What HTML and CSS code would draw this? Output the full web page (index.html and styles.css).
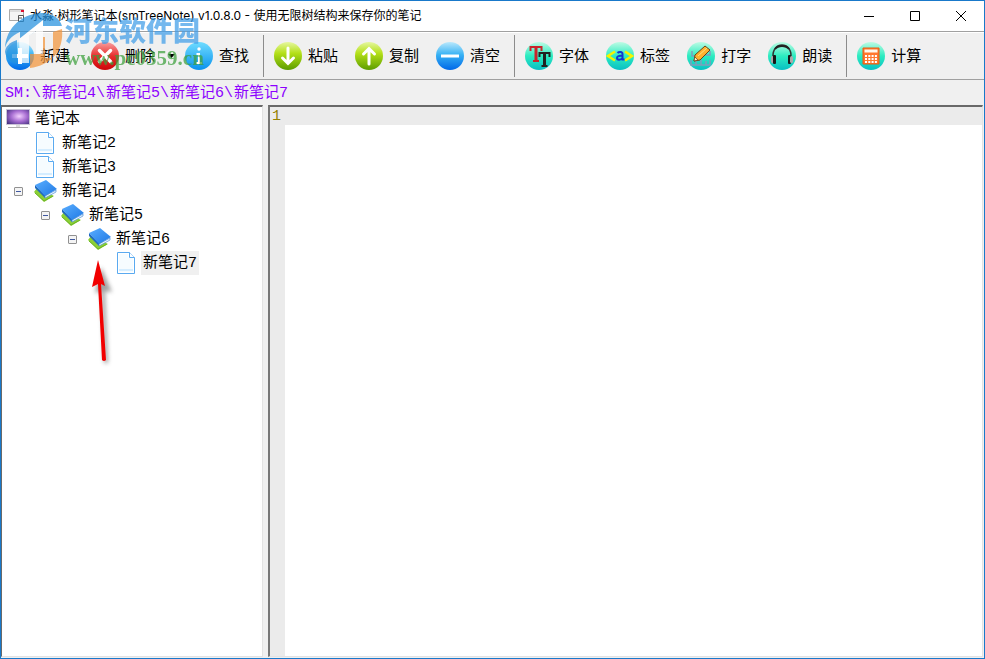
FILE: index.html
```html
<!DOCTYPE html>
<html lang="zh-CN">
<head>
<meta charset="utf-8">
<title>水淼·树形笔记本(smTreeNote) v1.0.8.0</title>
<link rel="stylesheet" href="styles.css">
</head>
<body>
<svg class="defs" aria-hidden="true">
  <defs>
    <linearGradient id="blue" x1="0" y1="0" x2="0" y2="1"><stop offset="0" stop-color="#b9e8fc"/><stop offset=".45" stop-color="#38b2f4"/><stop offset="1" stop-color="#0068e8"/></linearGradient>
    <linearGradient id="info" x1="0" y1="0" x2="0" y2="1"><stop offset="0" stop-color="#6fdcff"/><stop offset="1" stop-color="#0a92ee"/></linearGradient>
    <linearGradient id="red" x1="0" y1="0" x2="0" y2="1"><stop offset="0" stop-color="#f9a0a0"/><stop offset=".5" stop-color="#e82e2e"/><stop offset="1" stop-color="#cc0508"/></linearGradient>
    <linearGradient id="lime" x1="0" y1="0" x2="0" y2="1"><stop offset="0" stop-color="#e6f7a0"/><stop offset=".4" stop-color="#b4e018"/><stop offset="1" stop-color="#5c9c00"/></linearGradient>
    <linearGradient id="teal" x1="0" y1="0" x2="0" y2="1"><stop offset="0" stop-color="#bdfbe4"/><stop offset=".5" stop-color="#2cecc0"/><stop offset="1" stop-color="#08bfc4"/></linearGradient>
    <linearGradient id="cover" x1="0" y1="0" x2="1" y2="1"><stop offset="0" stop-color="#5aaeff"/><stop offset="1" stop-color="#1f78e4"/></linearGradient>
    <radialGradient id="screen" cx=".55" cy=".45" r=".7"><stop offset="0" stop-color="#f3d0ff"/><stop offset=".5" stop-color="#a56bd0"/><stop offset="1" stop-color="#42307e"/></radialGradient>
    <filter id="soft" x="-1" y="-.2" width="3" height="1.4"><feGaussianBlur stdDeviation="2"/></filter>
    <symbol id="book" viewBox="0 0 24 24">
      <path d="M1 13 4 9 21 17 11 23Z" fill="#8ccf36"/>
      <path d="M2 14 11 22 20 17" fill="none" stroke="#6db528"/>
      <path d="M2 6 12 16v3L2 9Z" fill="#2369bd"/>
      <path d="M12 17 23 11v2l-11 6Z" fill="#eef6ff" stroke="#4d8fd6" stroke-width=".7"/>
      <path d="M2 6 13 1l11 9-12 7Z" fill="url(#cover)"/>
    </symbol>
    <symbol id="page" viewBox="0 0 18 22">
      <path d="M.5.5h12l5 5v16H.5Z" fill="#fff" stroke="#5aaaf0"/>
      <path d="M2 2h9v4h5v14H2Z" fill="#f6fcff"/>
      <path d="M2 18h14" stroke="#d4edff" stroke-width="2"/>
      <path d="M12.500.500v5h5" fill="#fff" stroke="#5aaaf0"/>
    </symbol>
  </defs>
</svg>
<div class="window">
  <header class="titlebar">
    <svg class="app-icon" viewBox="0 0 16 16"><path d="M.5 1.500h14v11H.5Z" fill="#f4f4f4" stroke="#aaa"/><path d="M1 2h13v2H1Z" fill="#ddd"/><path d="M12 2h3v2h-3Z" fill="#e01030"/><path d="M9.500 7.500h5v6h-5Z" fill="#fff" stroke="#555"/><path d="M9 10h4" stroke="#555"/></svg>
    <h1 class="caption">水淼·树形笔记本(smTreeNote) v1.0.8.0 - 使用无限树结构来保存你的笔记</h1>
    <button class="win-btn" aria-label="最小化"><svg viewBox="0 0 12 12"><path d="M1 6.500h10"/></svg></button>
    <button class="win-btn" aria-label="最大化"><svg viewBox="0 0 12 12"><path d="M1.500 1.500h9v9h-9Z"/></svg></button>
    <button class="win-btn" aria-label="关闭"><svg viewBox="0 0 12 12"><path d="m1 1 10 10M11 1 1 11"/></svg></button>
  </header>

  <nav class="toolbar">
    <div class="group group-first">
      <button class="tool tool-new"><svg viewBox="0 0 28 28"><circle cx="14" cy="14" r="14" fill="url(#blue)"/><path d="M14 6v16M6 14h16" stroke="#fff" stroke-width="4"/></svg><span>新建</span></button>
      <div class="split">
        <button class="tool"><svg viewBox="0 0 28 28"><circle cx="14" cy="14" r="14" fill="url(#red)"/><path d="m8.500 8.500 11 11M19.500 8.500l-11 11" stroke="#fff" stroke-width="3.500" stroke-linecap="round"/></svg><span>删除</span></button>
        <button class="drop" aria-label="更多"><svg viewBox="0 0 7 4"><path d="M0 0h7L3.500 4Z"/></svg></button>
      </div>
      <button class="tool"><svg viewBox="0 0 28 28"><circle cx="14" cy="14" r="14" fill="url(#info)"/><circle cx="14" cy="7" r="1.700" fill="#fff"/><path d="M11.500 12H14v9M11 21h6" fill="none" stroke="#fff" stroke-width="2"/></svg><span>查找</span></button>
    </div>
    <div class="group">
      <button class="tool"><svg viewBox="0 0 28 28"><circle cx="14" cy="14" r="14" fill="url(#lime)"/><path d="M14 6v15M8.500 16l5.500 5.500 5.500-5.500" fill="none" stroke="#fff" stroke-width="3" stroke-linecap="round"/></svg><span>粘贴</span></button>
      <button class="tool"><svg viewBox="0 0 28 28"><circle cx="14" cy="14" r="14" fill="url(#lime)"/><path d="M14 22V7M8.500 12 14 6.500l5.500 5.500" fill="none" stroke="#fff" stroke-width="3" stroke-linecap="round"/></svg><span>复制</span></button>
      <button class="tool"><svg viewBox="0 0 28 28"><circle cx="14" cy="14" r="14" fill="url(#blue)"/><path d="M5 14h18" stroke="#fff" stroke-width="3"/></svg><span>清空</span></button>
    </div>
    <div class="group">
      <button class="tool"><svg viewBox="0 0 28 28"><circle cx="14" cy="14" r="14" fill="url(#teal)"/><path d="M5.500 9V5h11v4M11 5v14M8 19h6" fill="none" stroke="#c9252b" stroke-width="2"/><path d="M11 5v14" stroke="#c9252b" stroke-width="3"/><path d="M14.500 15v-4h10v4M16.500 24h6" fill="none" stroke="#222" stroke-width="2"/><path d="M19.500 11v13" stroke="#222" stroke-width="3"/></svg><span>字体</span></button>
      <button class="tool"><svg viewBox="0 0 28 28"><circle cx="14" cy="14" r="14" fill="url(#teal)"/><path d="M9 9.500 2 14l7 4.500M19 9.500l7 4.500-7 4.500" fill="none" stroke="#f6f400" stroke-width="2.500"/><path d="M11.500 11c1.500-1.500 5-1.500 5 1v5.500h2M16.500 13.500c-3 0-5.500.5-5.500 2.500s3.500 2.500 5.500 0" fill="none" stroke="#1238d0" stroke-width="2"/></svg><span>标签</span></button>
      <button class="tool"><svg viewBox="0 0 28 28"><circle cx="14" cy="14" r="14" fill="url(#teal)"/><path d="M5 9v5h6M4 18v5h19v-5M9 19v4M14 18v5M19 19v4M18 13h5V9" fill="none" stroke="#7f9dbc" stroke-width="1.500"/><path d="m7 19 1-6 10-9 5 4-10 10Z" fill="#ffb12d" stroke="#684219"/><path d="m11 14 9-8" stroke="#ffe07b"/><path d="m7 19 1-4 3 3Z" fill="#fff2ce" stroke="#684219" stroke-width=".7"/></svg><span>打字</span></button>
      <button class="tool"><svg viewBox="0 0 28 28"><circle cx="14" cy="14" r="14" fill="url(#teal)"/><path d="M5 15C4-1 24-1 23 15" fill="none" stroke="#333" stroke-width="1.500"/><path d="M7 7c3-4 11-4 14 0" fill="none" stroke="#222" stroke-width="2"/><rect x="3" y="14" width="3" height="7" rx="1.500" fill="#aaa"/><rect x="5" y="13" width="3" height="9" rx="1" fill="#171717"/><rect x="20" y="13" width="3" height="9" rx="1" fill="#171717"/><rect x="22" y="14" width="3" height="7" rx="1.500" fill="#aaa"/></svg><span>朗读</span></button>
    </div>
    <div class="group">
      <button class="tool"><svg viewBox="0 0 28 28"><circle cx="14" cy="14" r="14" fill="url(#teal)"/><path d="M6 6h16v16H6Z" fill="#ff782d" stroke="#e85d14"/><path d="M7.500 7.500h13v3h-13Z" fill="#fff8ed"/><path d="M8 14h12M8 17h12M8 20h12" stroke="#fff" stroke-width="2" stroke-dasharray="2 1.300"/></svg><span>计算</span></button>
    </div>
  </nav>

  <div class="path"><span>SM:\</span><span>新笔记4\</span><span>新笔记5\</span><span>新笔记6\</span><span>新笔记7</span></div>

  <main class="panes">
    <aside class="tree">
      <ul>
        <li class="row root"><svg class="monitor" viewBox="0 0 24 20"><path d="M.5.500h23v15H.5Z" fill="url(#screen)" stroke="#c9c4d6"/><path d="M10 16h4v2h-4Z" fill="#ddd"/><path d="M2 18.500h20" stroke="#aaa"/></svg><span class="label">笔记本</span></li>
        <li class="row leaf"><svg class="page"><use href="#page"/></svg><span class="label">新笔记2</span></li>
        <li class="row leaf"><svg class="page"><use href="#page"/></svg><span class="label">新笔记3</span></li>
        <li class="row"><button class="toggle" aria-label="折叠"></button><svg class="book"><use href="#book"/></svg><span class="label">新笔记4</span></li>
        <li><ul class="nested">
          <li class="row"><button class="toggle" aria-label="折叠"></button><svg class="book"><use href="#book"/></svg><span class="label">新笔记5</span></li>
          <li><ul class="nested">
            <li class="row"><button class="toggle" aria-label="折叠"></button><svg class="book"><use href="#book"/></svg><span class="label">新笔记6</span></li>
            <li><ul class="nested">
              <li class="row leaf"><svg class="page"><use href="#page"/></svg><span class="label selected">新笔记7</span></li>
            </ul></li>
          </ul></li>
        </ul></li>
      </ul>
      <svg class="arrow" viewBox="0 0 30 120"><path d="m14 9 11 25-7-1 3 72h-4l-3-72-6 2Z" fill="#555" opacity=".55" filter="url(#soft)"/><path d="m11 2 7 26-4-2 5 76q-2 2-4 0L11 26l-6 3Z" fill="#f20000"/></svg>
    </aside>
    <section class="editor">
      <div class="gutter">1</div>
      <textarea class="text" aria-label="笔记内容" spellcheck="false"></textarea>
    </section>
  </main>

  <div class="watermark">
    <svg class="mark" viewBox="0 0 58 58"><path d="M0 36C1 14 20 0 39 1c10 1 16 6 18 13H38L22 25l-7 3v-8C6 24 2 29 0 36Z" fill="#2591df"/><path d="M0 40c0-5 5-10 12-12v24C5 50 1 46 0 40Z" fill="#2591df"/><path d="M57 17c2 21-10 36-32 39V42h8V25h7v21h8V20Z" fill="#f3953c"/><path d="M14 27 38 8v34h-7V19l-7 5v27h-9Z" fill="#fff"/></svg>
    <div><div class="brand">河东软件园</div><div class="site">www.pc0359.cn</div></div>
  </div>
</div>
</body>
</html>
```

FILE: styles.css
```css
* { box-sizing: border-box; }
body {
  margin: 0;
  font: 15px/24px "Liberation Mono", "Noto Sans CJK SC", monospace;
  color: #000;
}
button { border: 0; padding: 0; background: none; font: inherit; color: inherit; }
svg { display: block; flex: none; }
ul { list-style: none; margin: 0; padding: 0; }
.defs { position: absolute; width: 0; height: 0; }
.window {
  position: relative;
  display: flex;
  flex-direction: column;
  height: 100vh;
  border: 1px solid #1979ca;
  background: #f0f0f0;
}
.titlebar { display: flex; align-items: center; height: 30px; padding-left: 8px; background: #fff; }
.app-icon { width: 16px; height: 16px; }
.caption {
  flex: 1;
  margin: 0 0 0 5px;
  font: 12px/18px Inter, "Noto Sans CJK SC", sans-serif;
  white-space: nowrap;
}
.win-btn { display: flex; justify-content: center; align-items: center; width: 46px; height: 28px; }
.win-btn svg { width: 12px; height: 12px; fill: none; stroke: #000; }

.toolbar {
  display: flex;
  height: 49px;
  padding: 3px 0 2px;
  border-top: 1px solid #a0a0a0;
  border-bottom: 1px solid #a0a0a0;
  box-shadow: inset 0 1px #fff;
}
.group { display: flex; align-items: center; padding: 0 5px 0 2px; }
.group + .group { border-left: 1px solid #8c8c8c; }
.group-first { padding-left: 0; gap: 4px; }
.split { display: flex; align-items: center; margin-right: -4px; }
.tool {
  display: flex;
  align-items: center;
  gap: 6px;
  height: 40px;
  padding: 0 9px 0 8px;
  white-space: nowrap;
}
.tool span { padding-top: 3px; }
.tool-new { padding-left: 5px; }
.tool svg { width: 28px; height: 28px; }
.drop { width: 13px; height: 40px; padding-left: 4px; }
.drop svg { width: 7px; height: 4px; }

.path {
  display: flex;
  gap: 1px;
  height: 25px;
  padding-left: 4px;
  line-height: 28px;
  color: #8c00ff;
  white-space: nowrap;
}

.panes { flex: 1; display: flex; gap: 5px; min-height: 0; padding: 0 1px 1px 0; }
.tree, .editor { border: 1px solid #e3e3e3; border-top: 2px solid #696969; background: #fff; }
.tree { position: relative; flex: 0 0 262px; border-left: 1px solid #696969; overflow: hidden; }
.row { display: flex; align-items: center; height: 24px; padding-left: 12px; }
.root { padding-left: 4px; }
.leaf { padding-left: 34px; }
.nested { padding-left: 27px; }
.label { height: 24px; padding: 0 2px; margin-left: 3px; line-height: 26px; white-space: nowrap; }
.leaf .label { margin-left: 6px; }
.selected { background: #f0f0f0; }
.monitor { width: 24px; height: 20px; }
.page { width: 18px; height: 22px; }
.book { width: 24px; height: 24px; margin-left: 10px; }
.toggle {
  display: flex;
  align-items: center;
  justify-content: center;
  width: 9px;
  height: 9px;
  border: 1px solid #919191;
  border-radius: 1px;
  background: #f4f4f4;
}
.toggle::before { content: ""; width: 5px; height: 1px; background: #3f58a0; }
.arrow { position: absolute; left: 85px; top: 151px; width: 30px; height: 120px; }

.editor { flex: 1; display: flex; border-left: 2px solid #777; }
.gutter { width: 15px; padding-left: 2px; background: #ebebeb; color: #968200; line-height: 20px; }
.text {
  flex: 1;
  min-width: 0;
  margin: 0;
  padding: 0;
  border: 0;
  outline: 0;
  resize: none;
  font: inherit;
  line-height: 18px;
  background: linear-gradient(#ebebeb, #ebebeb) 0 0 / 100% 18px no-repeat #fff;
}

.watermark {
  position: absolute;
  left: 4px;
  top: 11px;
  display: flex;
  gap: 2px;
  pointer-events: none;
  opacity: .72;
}
.mark { width: 58px; height: 58px; }
.brand { font: 900 27px/36px "Noto Sans CJK SC", sans-serif; color: #409de8; white-space: nowrap; }
.site { font: bold 21px/20px "Liberation Serif", serif; color: #3ca03c; white-space: nowrap; }
```
